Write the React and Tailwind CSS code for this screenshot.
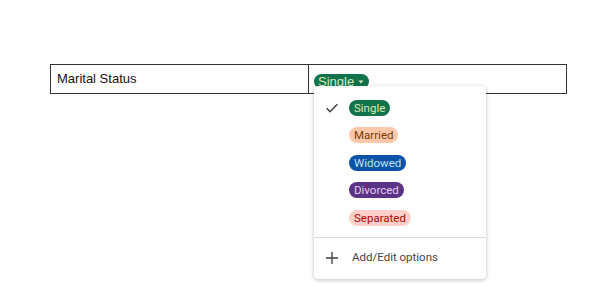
import React from 'react';

const options = [
  { label: 'Single', bg: 'bg-[#11734b]', fg: 'text-[#d4edbc]', checked: true },
  { label: 'Married', bg: 'bg-[#ffc8aa]', fg: 'text-[#753800]' },
  { label: 'Widowed', bg: 'bg-[#0a53a8]', fg: 'text-[#bfe1f6]' },
  { label: 'Divorced', bg: 'bg-[#5a3286]', fg: 'text-[#e6cff2]' },
  { label: 'Separated', bg: 'bg-[#ffcfc9]', fg: 'text-[#b10202]' },
];

const Check = () => (
  <svg width="16" height="16" viewBox="0 0 24 24" fill="none" stroke="#3c4043" strokeWidth="2.2">
    <path d="M4 12.5l5 5L20 6.5" />
  </svg>
);

const Plus = () => (
  <svg width="16" height="16" viewBox="0 0 24 24" fill="none" stroke="#3c4043" strokeWidth="2">
    <path d="M12 3v18M3 12h18" />
  </svg>
);

export default function App() {
  return (
    <div className="w-[600px] h-[298px] bg-white overflow-hidden pt-[64px] pl-[50px]">
      <div className="flex w-[517px] h-[30px] border border-[#333] font-['Liberation_Sans',Arial,sans-serif] text-[13px] text-[#111]">
        {/* Label cell */}
        <div className="w-[258px] border-r border-[#333] pl-[6px] pt-[6px] leading-[16px]">
          Marital Status
        </div>
        {/* Value cell with open dropdown */}
        <div className="relative flex-1 pl-[5px] pt-[7px]">
          <div className="inline-flex items-center h-[15px] rounded-full bg-[#11734b] text-[#d4edbc] pl-[4px] pr-[5px] text-[13px] leading-[15px]">
            <span>Single</span>
            <svg className="ml-[4px]" width="6" height="4" viewBox="0 0 6 4">
              <path d="M0.5 0.5h5L3 3.5z" fill="#d4edbc" />
            </svg>
          </div>

          <div className="absolute left-[5px] top-[21px] w-[172px] bg-white rounded-[4px] shadow-[0_1px_4px_rgba(0,0,0,0.25)] font-['Roboto',sans-serif] z-10">
            <div className="pt-[8px] pb-[5px]">
              {options.map((o) => (
                <div key={o.label} className="flex items-center h-[27.5px] pl-[10px]">
                  <div className="w-[16px] flex justify-center">{o.checked && <Check />}</div>
                  <span
                    className={`ml-[9px] inline-flex items-center h-[16px] px-[5px] rounded-[8px] text-[11.5px] leading-[16px] ${o.bg} ${o.fg}`}
                  >
                    {o.label}
                  </span>
                </div>
              ))}
            </div>
            <div className="border-t border-[#dadce0] h-[42px] flex items-center pl-[10px]">
              <Plus />
              <span className="ml-[12px] text-[11.5px] text-[#444746]">Add/Edit options</span>
            </div>
          </div>
        </div>
      </div>
    </div>
  );
}
